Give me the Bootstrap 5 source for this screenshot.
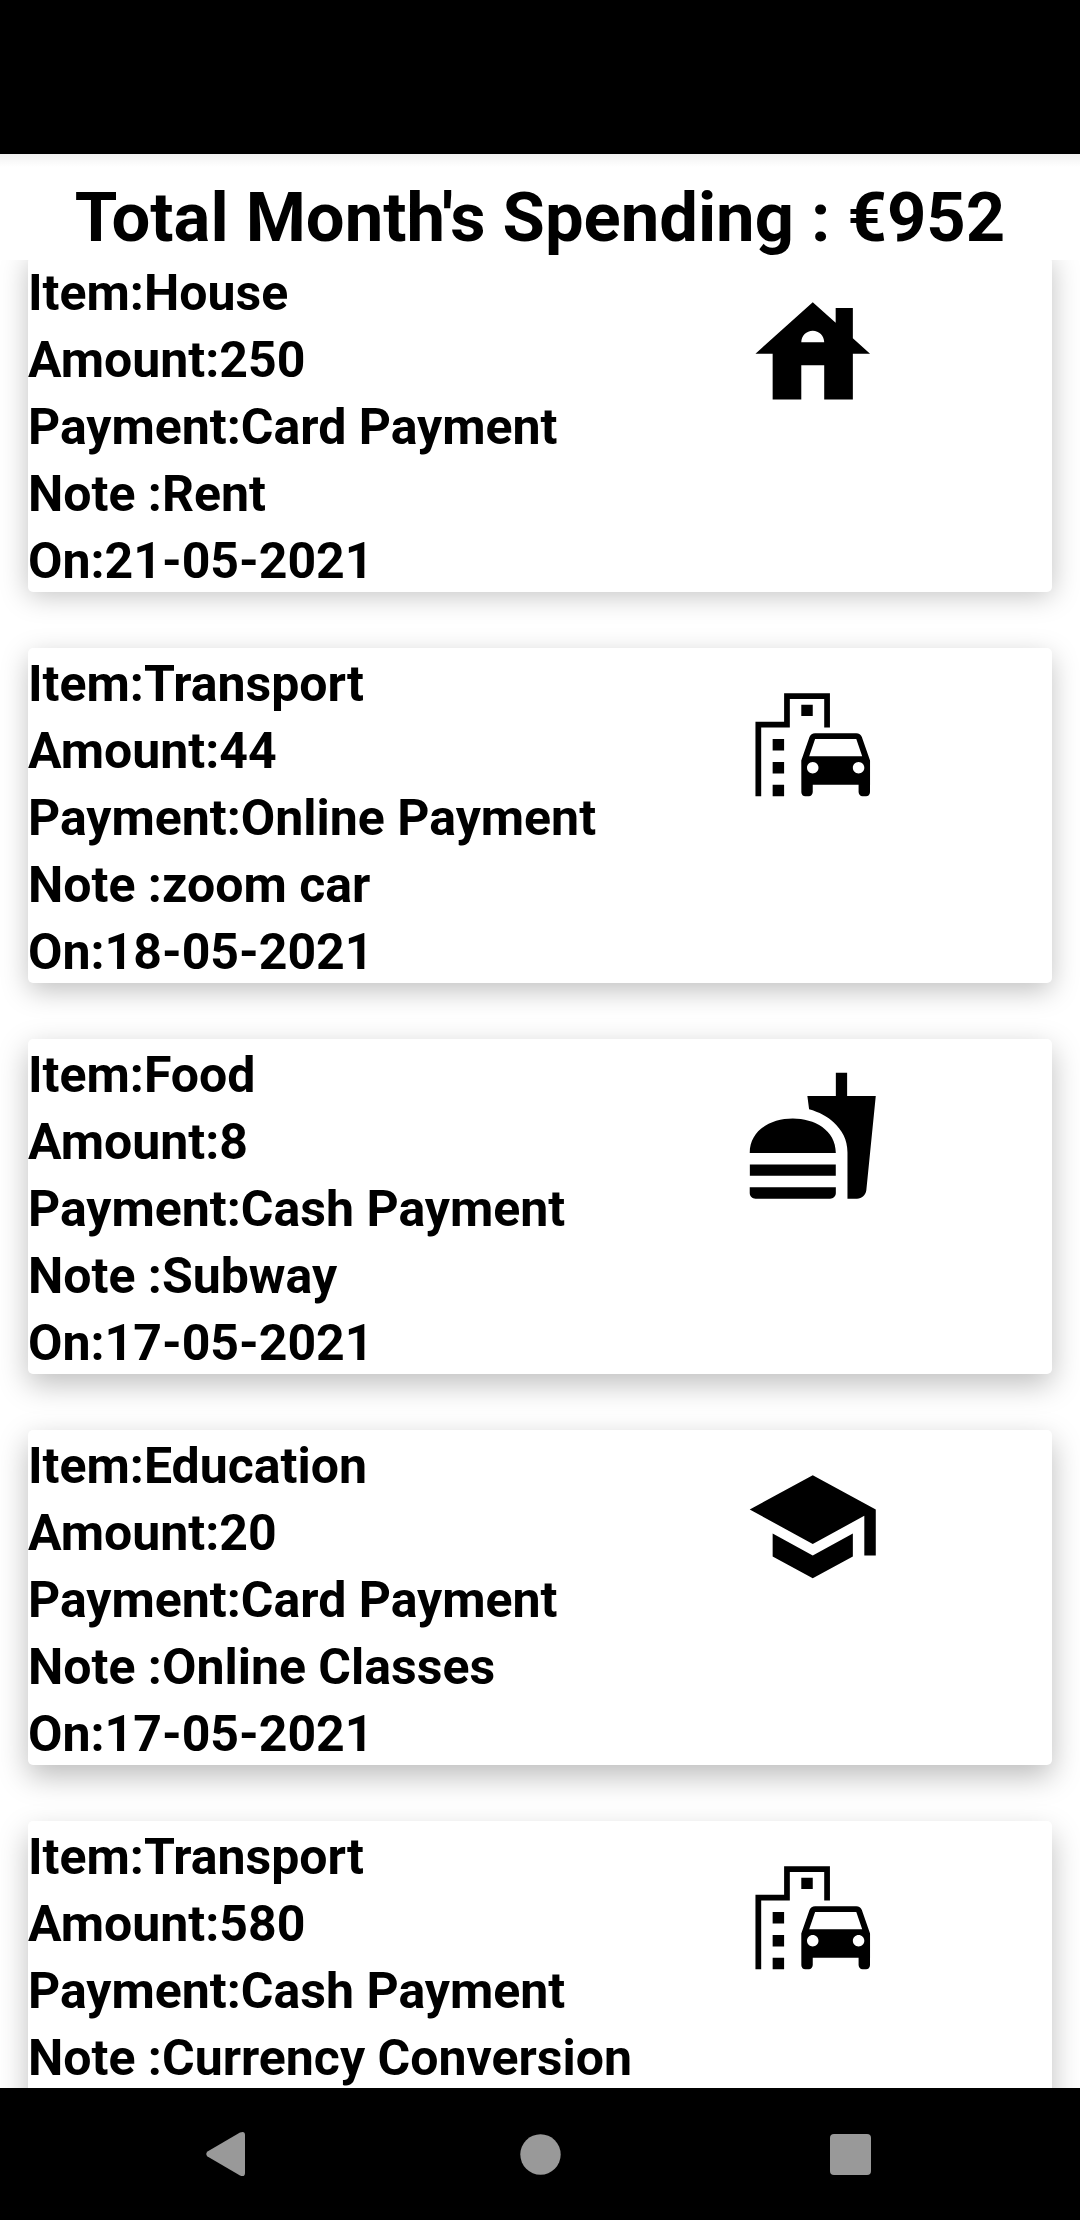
<!DOCTYPE html>
<html lang="en">
<head>
<meta charset="utf-8">
<meta name="viewport" content="width=device-width, initial-scale=1">
<title>Monthly spending</title>
<link href="https://cdn.jsdelivr.net/npm/bootstrap@5.3.0/dist/css/bootstrap.min.css" rel="stylesheet">
<style>
  body { font-family: Roboto, "Liberation Sans", sans-serif; font-weight: 700; color: #000; background: #fff; }
  .app-screen { height: 2220px; }
  .status-strip { height: 154px; background: #000; }
  .total-bar { height: 106px; background: linear-gradient(#f1f1f1, #fff 13px); z-index: 1; }
  .total-bar h1 { font-size: 68.75px; font-weight: 700; line-height: 80px; padding-top: 24px; white-space: nowrap; }
  .expense-list { padding: 0 28px; gap: 56px; min-height: 0; background: #fff; }
  .expense { height: 335px; border: 0; border-radius: 5px; background: #fff; flex-shrink: 0; box-shadow: 0 10px 30px rgba(0,0,0,.26); }
  .expense:first-child { margin-top: -3px; box-shadow: 0 3px 28px rgba(0,0,0,.25); }
  .expense:nth-child(2) { box-shadow: 0 8px 28px -1px rgba(0,0,0,.26); }
  .expense:nth-child(4) { box-shadow: 0 11px 30px rgba(0,0,0,.27); }
  .expense:nth-child(5) { box-shadow: 0 13px 30px rgba(0,0,0,.26); }
  .expense-text { width: 716px; font-size: 50px; line-height: 67px; padding-top: 3px; white-space: nowrap; }
  .expense svg { width: 137.5px; height: 137.5px; margin-top: 27.5px; }
  .nav-strip { height: 132px; background: #000; padding: 0 209px 0 206px; }
</style>
<script src="https://cdn.jsdelivr.net/npm/bootstrap@5.3.0/dist/js/bootstrap.bundle.min.js"></script>
</head>
<body>
<svg class="d-none">
  <symbol id="ic-house" viewBox="0 0 24 24"><path d="M19 9.3V4h-3v2.6L12 3 2 12h3v8h5v-6h4v6h5v-8h3l-3-2.7zm-9 .7c0-1.1.9-2 2-2s2 .9 2 2h-4z"/></symbol>
  <symbol id="ic-transport" viewBox="0 0 24 24"><path d="M20.57 10.66c-.14-.4-.52-.66-.97-.66h-7.19c-.46 0-.83.26-.98.66L10 14.77l.01 5.51c0 .38.31.72.69.72h.62c.38 0 .68-.38.68-.76V19h8v1.24c0 .38.31.76.69.76h.61c.38 0 .69-.34.69-.72l.01-1.37v-4.14l-1.43-4.11zM12.41 11h7.19l1.03 3h-9.25l1.03-3zM12 17c-.55 0-1-.45-1-1s.45-1 1-1 1 .45 1 1-.45 1-1 1zm8 0c-.55 0-1-.45-1-1s.45-1 1-1 1 .45 1 1-.45 1-1 1zM14 9h1V3H7v5H2v13h1V9h5V4h6v5zM5 11h2v2H5zM10 5h2v2h-2zM5 15h2v2H5zM5 19h2v2H5z"/></symbol>
  <symbol id="ic-food" viewBox="0 0 24 24"><path d="M18.06 22.99h1.66c.84 0 1.53-.64 1.63-1.46L23 5.05h-5V1h-1.97v4.05h-4.97l.3 2.34c1.71.47 3.31 1.32 4.27 2.26 1.44 1.42 2.43 2.89 2.43 5.29v8.05zM1 21.99V21h15.03v.99c0 .55-.45 1-1.01 1H2.01c-.56 0-1.01-.45-1.01-1zm15.03-7c0-8-15.03-8-15.03 0h15.03zM1.02 17h15v2h-15z"/></symbol>
  <symbol id="ic-school" viewBox="0 0 24 24"><path d="M5 13.18v4L12 21l7-3.82v-4L12 17l-7-3.82zM12 3L1 9l11 6 9-4.91V17h2V9L12 3z"/></symbol>
</svg>
<div class="app-screen d-flex flex-column overflow-hidden">
  <div class="status-strip flex-shrink-0"></div>
  <header class="total-bar flex-shrink-0 position-relative text-center">
    <h1 class="m-0">Total Month's Spending : €952</h1>
  </header>
  <main class="expense-list d-flex flex-column flex-grow-1 overflow-hidden">
    <article class="expense card flex-row align-items-start">
      <div class="expense-text"><div>Item:House</div><div>Amount:250</div><div>Payment:Card Payment</div><div>Note :Rent</div><div>On:21-05-2021</div></div>
      <svg><use href="#ic-house"/></svg>
    </article>
    <article class="expense card flex-row align-items-start">
      <div class="expense-text"><div>Item:Transport</div><div>Amount:44</div><div>Payment:Online Payment</div><div>Note :zoom car</div><div>On:18-05-2021</div></div>
      <svg><use href="#ic-transport"/></svg>
    </article>
    <article class="expense card flex-row align-items-start">
      <div class="expense-text"><div>Item:Food</div><div>Amount:8</div><div>Payment:Cash Payment</div><div>Note :Subway</div><div>On:17-05-2021</div></div>
      <svg><use href="#ic-food"/></svg>
    </article>
    <article class="expense card flex-row align-items-start">
      <div class="expense-text"><div>Item:Education</div><div>Amount:20</div><div>Payment:Card Payment</div><div>Note :Online Classes</div><div>On:17-05-2021</div></div>
      <svg><use href="#ic-school"/></svg>
    </article>
    <article class="expense card flex-row align-items-start">
      <div class="expense-text"><div>Item:Transport</div><div>Amount:580</div><div>Payment:Cash Payment</div><div>Note :Currency Conversion</div></div>
      <svg><use href="#ic-transport"/></svg>
    </article>
  </main>
  <nav class="nav-strip flex-shrink-0 d-flex justify-content-between align-items-center">
    <svg width="44" height="46" viewBox="0 0 44 46" fill="#999"><path d="M1.5 20.5 34 1.5Q39-.5 39 4V42Q39 46.500 34 44.500L1.500 25.500Q-1 23 1.500 20.500Z"/></svg>
    <svg width="41" height="41" viewBox="0 0 41 41" fill="#999"><circle cx="20.500" cy="20.500" r="20.200"/></svg>
    <svg width="41" height="41" viewBox="0 0 41 41" fill="#999"><rect width="41" height="41" rx="4"/></svg>
  </nav>
</div>
</body>
</html>
